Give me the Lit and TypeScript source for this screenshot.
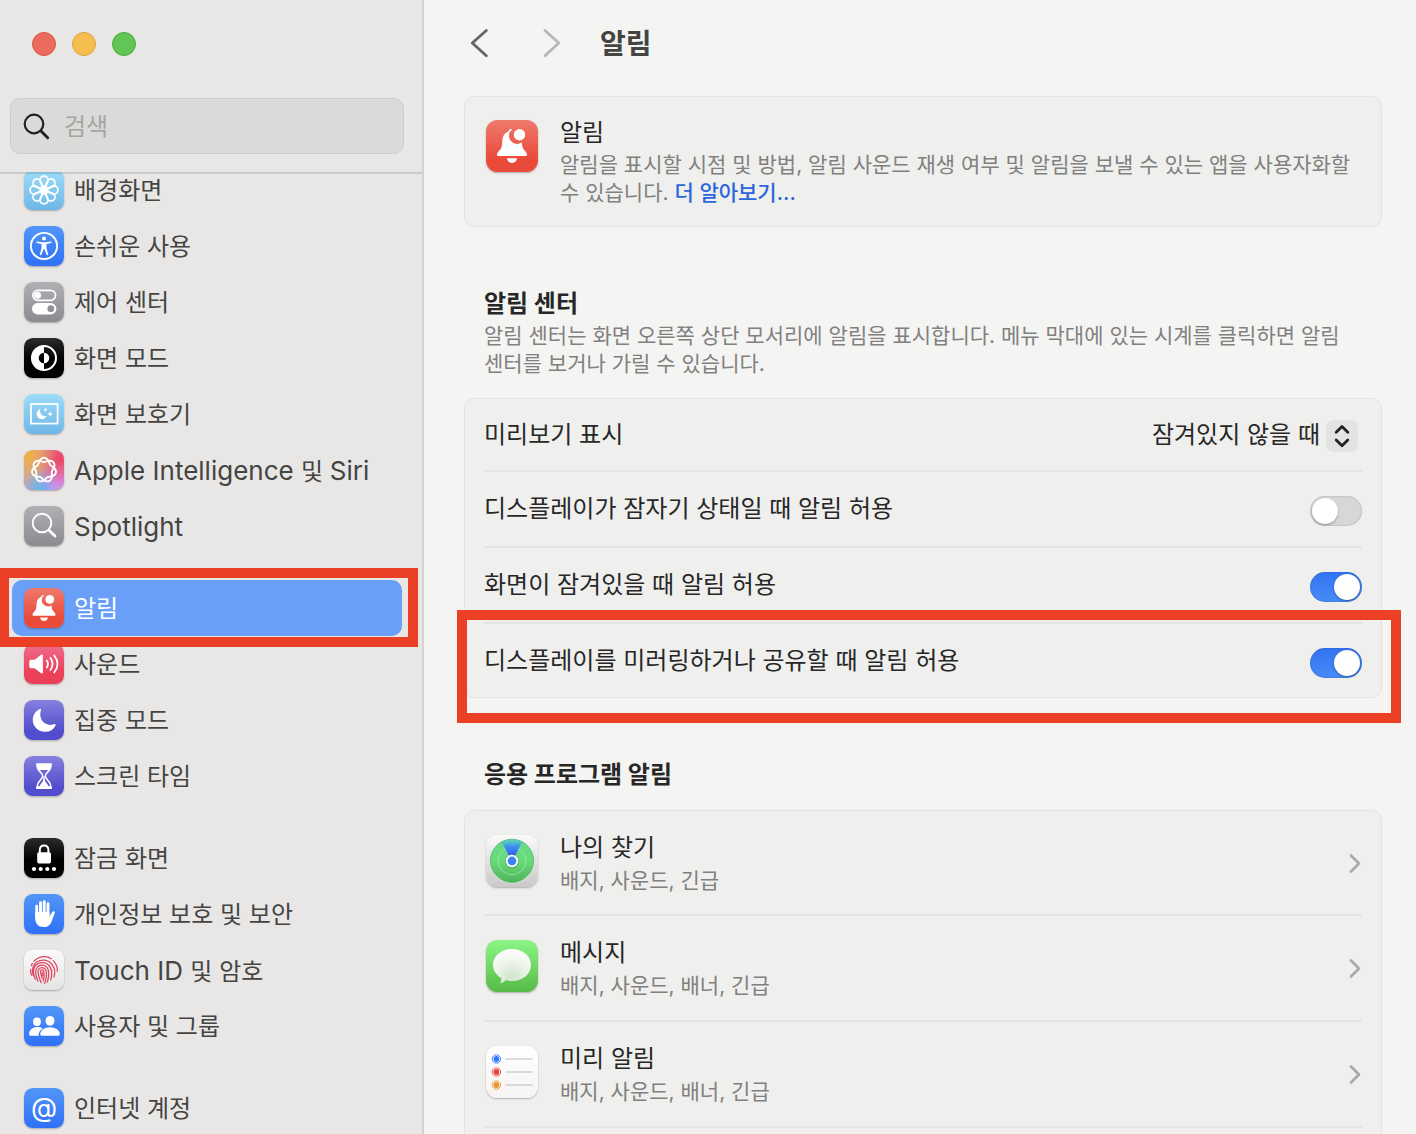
import { LitElement, html, svg, css, nothing } from "lit";
import type { TemplateResult } from "lit";
import { customElement, property } from "lit/decorators.js";

const point = (radius: number, angle: number) =>
  `${(20 + radius * Math.sin(angle)).toFixed(2)} ${(20 - radius * Math.cos(angle)).toFixed(2)}`;

/** Seven-lobed knot: one closed curve that circles the centre twice. */
const knot = (() => {
  const steps = 168;
  const points: string[] = [];
  for (let i = 0; i < steps; i++) {
    const angle = (i / steps) * Math.PI * 4;
    points.push(point(10.1 + 2.1 * Math.cos(3.5 * angle), angle));
  }
  return `M${points.join("L")}Z`;
})();

const bell = svg`
  <path fill="#fff" d="M26.200 9.300c-.6-.3-1.500-.3-2.400.1-.9.5-1.300 1.100-1.500 2-3.900 1.600-6 5-6 9.600 0 5.200-.8 7.200-3.100 9.800-1.400 1.600-2.200 2.500-2.200 3.700 0 1 .7 1.600 1.800 1.600h26.400c1.100 0 1.800-.6 1.800-1.600 0-1.200-.8-2.100-2.200-3.700-2-2.300-2.900-4.300-3-8.500a7.800 7.800 0 0 1-9.600-13z"/>
  <path fill="#fff" d="M21 38.200h10c-.4 2.900-2.300 4.700-5 4.700s-4.600-1.800-5-4.700z"/>
  <circle cx="33.500" cy="14.800" r="5.700" fill="#fff"/>`;

const glyphs: Record<string, TemplateResult | TemplateResult[]> = {
  wallpaper: svg`<g fill="none" stroke="#fff" stroke-width="1.700">
    ${[0, 45, 90, 135, 180, 225, 270, 315].map(
      (a) => svg`<path transform="rotate(${a} 20 20)" d="M20 18C19.200 15 15.900 13.500 15.900 10.200a4.100 4.100 0 0 1 8.200 0C24.100 13.500 20.800 15 20 18z"/>`
    )}</g><circle cx="20" cy="20" r="2" fill="none" stroke="#fff" stroke-width="1.500"/>`,
  accessibility: svg`
    <circle cx="20" cy="20" r="13.100" fill="none" stroke="#fff" stroke-width="1.900"/>
    <circle cx="20" cy="12.600" r="2" fill="#fff"/>
    <path fill="#fff" d="M13.300 15.500l5 .8h3.400l5-.8c1-.1 1.200 1.300.2 1.500l-4.400.9v4l1.700 6.300c.3 1.100-1.200 1.500-1.600.5L20.300 23h-.6l-2.300 5.700c-.4 1-1.900.6-1.600-.5l1.700-6.300v-4l-4.400-.9c-1-.2-.8-1.600.2-1.500z"/>`,
  control: svg`
    <rect x="8.800" y="8.300" width="22.800" height="10" rx="5" fill="none" stroke="#fff" stroke-width="1.700"/>
    <circle cx="13.600" cy="13.300" r="3.500" fill="#fff"/>
    <rect x="8" y="21" width="24.400" height="11.400" rx="5.700" fill="#fff"/>
    <circle cx="26.800" cy="26.700" r="3.400" fill="#929196"/>`,
  appearance: svg`
    <circle cx="20" cy="20" r="12" fill="none" stroke="#fff" stroke-width="2"/>
    <path fill="#fff" d="M20 7.500a12.500 12.500 0 0 0 0 25v-7.200a5.300 5.300 0 0 1 0-10.600z"/>
    <path fill="#fff" d="M20 14.700a5.300 5.300 0 0 1 0 10.600z"/>`,
  screensaver: svg`
    <rect x="7" y="10" width="26.600" height="19.600" fill="none" stroke="#fff" stroke-width="1.700"/>
    <path fill="#fff" d="M16.200 14.800c-5.600 2.600-4 10.300 1.500 10.400 2.300 0 4.100-1.200 4.900-3.200-4.300 1-7.600-2.800-6.400-7.200zM21.500 13.300l.6 1.700 1.700.6-1.700.6-.6 1.700-.6-1.700-1.700-.6 1.700-.6zM26.200 17l.8 2.200 2.200.8-2.200.8-.8 2.200-.8-2.200-2.200-.8 2.200-.8z"/>`,
  intelligence: svg`<path d="${knot}" fill="none" stroke="#fff" stroke-width="1.900" stroke-linejoin="round"/>`,
  spotlight: svg`<g fill="none" stroke="#fff" stroke-linecap="round">
    <circle cx="18" cy="17" r="9.300" stroke-width="1.900"/><path d="M25 24.300l6 5.800" stroke-width="2.800"/></g>`,
  sound: svg`
    <path fill="#fff" d="M7 15.800h3.700l6.300-5c.9-.7 1.900-.2 1.900.9v16.600c0 1.100-1 1.600-1.900.9l-6.300-5H7c-1 0-1.700-.7-1.700-1.700v-5c0-1 .7-1.700 1.700-1.700z"/>
    <path fill="none" stroke="#fff" stroke-width="1.700" stroke-linecap="round" d="M22.800 16.500c1.500 2.200 1.500 4.800 0 7M26.400 14c2.700 3.700 2.700 8.300 0 12M30.200 11.500c4.200 5.400 4.200 11.600 0 17"/>`,
  focus: svg`<path fill="#fff" d="M15.800 8.900C8.800 12 6.500 21 11.300 27.200c5.300 6.800 17.100 6.200 20.300-2.300.2-.7-.2-1.100-.9-.8C22.500 27.300 13.700 20.500 16.900 9.800c.2-.8-.3-1.200-1.100-.9z"/>`,
  hourglass: svg`
    <path fill="none" stroke="#fff" stroke-width="1.600" stroke-linejoin="round" d="M13 9c0 6.500 5.700 7.500 5.700 11S13 25 13 31h14c0-6-5.700-7.500-5.700-11S27 15.500 27 9z"/>
    <path fill="none" stroke="#fff" stroke-width="2.200" stroke-linecap="round" d="M13 8.300h14M13 31.900h14"/>
    <path fill="#fff" d="M13 8.500h14c0 2.500-.8 4.200-1.900 5.500H14.900C13.800 12.700 13 11 13 8.500zM19.500 20h1l.5 5 4 5.500H15l4-5.500z"/>`,
  lock: svg`
    <rect x="13.200" y="14.300" width="13.800" height="11.200" rx="1.800" fill="#fff"/>
    <path fill="none" stroke="#fff" stroke-width="2" d="M15.800 15v-2.700c0-2.900 1.600-4.700 4.300-4.700s4.300 1.800 4.300 4.700V15"/>
    <g fill="#fff"><circle cx="10" cy="31" r="2.100"/><circle cx="16.700" cy="31" r="2.100"/><circle cx="23.300" cy="31" r="2.100"/><circle cx="30" cy="31" r="2.100"/></g>`,
  hand: svg`
    <g stroke="#fff" stroke-width="2.900" stroke-linecap="round" fill="none"><path d="M12.700 12.200V24M16.500 8.800V23M20.200 7.600V23M24 9.600V23"/></g>
    <path fill="#fff" d="M11.250 18h14.200v4.700l2.800-4.600c.9-1.400 3-.7 2.500 1l-3 7.900c-1.400 4-3.800 6-8 6-5.700 0-8.500-3.400-8.500-9z"/>`,
  fingerprint: svg`<g fill="none" stroke="#e0445e" stroke-width="1.250" stroke-linecap="round">
    <path d="M10 11.200C15.500 5.300 23 5.600 27.200 8.800M29.200 10.600c3 3 4.400 6.500 4.200 10.700M7.300 15.600l1-2M6.600 19.300c-.3 2.400.2 4 .9 5.800M9.200 25.600c-1.500-5-.8-10.300 3.600-13.500 5.200-3.600 11.600-2.200 15.200 2.400 2.500 3.300 3.300 8.300 2 12.500M11.200 29c-1.400-3.500-2.200-6.400-1.500-9.700 1.600-7.200 11.300-9 15.600-3.300 2.800 3.600 3 9 1.400 14M14 31.200c-1.800-4-2.600-7-2.200-10.200.8-6 7.900-7.700 11.300-3.300 2.400 3.200 2 8.600.3 14.400M17.200 32.700c-2-4.500-3-7.700-3.100-10.600-.1-4.800 5.100-6 7.300-2.600 1.600 2.600 1.400 7.600-.7 14M18.300 28.500c-1-2.700-1.700-4.700-1.800-6.700 0-2.300 2.600-2.600 3.200-.6.800 2.800.5 5.700-.5 10M18.300 22.500l.5 3.200"/></g>`,
  users: svg`<g fill="#fff">
    <ellipse cx="13" cy="15.700" rx="3.900" ry="4.300"/><path d="M18.800 22.400c-1.700-.9-3.600-1.300-5.700-1.300-4.400 0-8 3-8 6.800 0 1.300.6 1.900 1.800 1.900h7.800c-.6-2.600 1.100-5.700 4.100-7.400z"/>
    <ellipse cx="26" cy="14.800" rx="4.500" ry="4.900"/><path d="M26 21.200c-5.200 0-9.800 3.300-9.800 6.800 0 1.200.8 1.800 2 1.800h15.600c1.200 0 2-.6 2-1.800 0-3.500-4.600-6.800-9.800-6.800z"/></g>`,
  at: svg`<text x="20" y="28.500" text-anchor="middle" font-family="Inter, sans-serif" font-size="27" fill="#fff">@</text>`,
  findmy: svg`
    <defs>
      <linearGradient id="radar" x1="0" y1="0" x2="0" y2="1"><stop stop-color="#69d98a"/><stop offset=".5" stop-color="#69da79"/><stop offset="1" stop-color="#51b35a"/></linearGradient>
      <linearGradient id="beam" x1="0" y1="0" x2="0" y2="1"><stop stop-color="#5ddbb0"/><stop offset=".45" stop-color="#3f8df0"/><stop offset="1" stop-color="#2a5cf5"/></linearGradient>
    </defs>
    <circle cx="26" cy="26" r="22.300" fill="#e9fbea"/>
    <circle cx="26" cy="25.800" r="21.600" fill="url(#radar)" stroke="#4bb86a" stroke-width=".8"/>
    <circle cx="26" cy="26" r="13.800" fill="none" stroke="#9ce8a4" stroke-width=".8"/>
    <path d="M16 6.900a21.600 21.600 0 0 1 20 0L29 21h-6z" fill="url(#beam)"/>
    <circle cx="26" cy="26.500" r="6.900" fill="#2e7c4a" opacity=".35"/>
    <circle cx="26" cy="26" r="6.200" fill="#fff"/><circle cx="26" cy="26" r="4.400" fill="#3a83f0"/>`,
  messages: svg`
    <defs><radialGradient id="bubble" cx=".5" cy=".8" r=".85"><stop stop-color="#d2e5cc"/><stop offset=".6" stop-color="#f1f6ef"/><stop offset="1" stop-color="#fff"/></radialGradient></defs>
    <path fill="url(#bubble)" d="M26 9c10.500 0 19 7 19 16s-8.500 16-19 16c-2.200 0-4.300-.3-6.300-.9-1.400 1.800-3.500 3-5.600 3.200.9-1.200 1.500-3 1.200-5.200C10.200 35.200 7 30.400 7 25 7 16 15.500 9 26 9z"/>`,
  reminders: svg`
    ${[["#3478f6", 13], ["#e2483d", 26], ["#e8962e", 39]].map(
      ([c, y]) => svg`<circle cx="10.400" cy="${y}" r="4.200" fill="none" stroke="${c}" stroke-width=".9"/><circle cx="10.400" cy="${y}" r="2.900" fill="${c}"/><path d="M20 ${y}h26" stroke="#cfcfcf" stroke-width="1.500" stroke-linecap="round"/>`
    )}`,
};

@customElement("app-tile")
class AppTile extends LitElement {
  @property() name = "";
  @property({ type: Boolean, reflect: true }) large = false;

  static styles = css`
    :host { display: block; flex: none; width: 40px; height: 40px; }
    :host([large]) { width: 52px; height: 52px; }
    .tile {
      display: block; width: 100%; height: 100%; border-radius: 22%;
      box-shadow: 0 1px 2px rgba(0, 0, 0, 0.28);
    }
    svg { display: block; width: 100%; height: 100%; }
    .wallpaper, .screensaver { background: linear-gradient(#9cdcf8, #6fb7e8); }
    .accessibility, .hand, .users, .at { background: linear-gradient(#5296f8, #2f70f6); }
    .control, .spotlight { background: linear-gradient(#b1b0b5, #8b8a8f); }
    .appearance, .lock { background: linear-gradient(#2b2b2b, #000 55%); }
    .intelligence {
      background:
        radial-gradient(circle at 10% 12%, #f0b040 0, rgba(240, 176, 64, 0) 55%),
        radial-gradient(circle at 90% 22%, #ef4166 0, rgba(239, 65, 102, 0) 60%),
        radial-gradient(circle at 92% 78%, #d88cf5 0, rgba(216, 140, 245, 0) 50%),
        radial-gradient(circle at 50% 100%, #4db8f8 0, rgba(77, 184, 248, 0) 55%),
        #cfa6a8;
    }
    .bell { background: linear-gradient(#ef7a6e, #ea4a3a 75%); }
    .sound { background: linear-gradient(#ef6d8c, #ec3f58 75%); }
    .focus, .hourglass { background: linear-gradient(#8681e0, #514ccb 80%); }
    .fingerprint { background: linear-gradient(#fafafa, #e4e4e4); }
    .findmy { background: linear-gradient(#fafafa, #c9c9c8); }
    .messages { background: linear-gradient(#8cf686, #56bb47); }
    .reminders { background: linear-gradient(#fff, #f5f4f3); }
  `;

  render() {
    const isBell = this.name === "bell";
    const box = this.large || isBell ? "0 0 52 52" : "0 0 40 40";
    return html`<span class="tile ${this.name}">
      <svg viewBox=${box} aria-hidden="true">${isBell ? bell : glyphs[this.name]}</svg>
    </span>`;
  }
}

interface NavItem { icon: string; label: string; }

const navGroups: NavItem[][] = [
  [
    { icon: "wallpaper", label: "배경화면" },
    { icon: "accessibility", label: "손쉬운 사용" },
    { icon: "control", label: "제어 센터" },
    { icon: "appearance", label: "화면 모드" },
    { icon: "screensaver", label: "화면 보호기" },
    { icon: "intelligence", label: "Apple Intelligence 및 Siri" },
    { icon: "spotlight", label: "Spotlight" },
  ],
  [
    { icon: "bell", label: "알림" },
    { icon: "sound", label: "사운드" },
    { icon: "focus", label: "집중 모드" },
    { icon: "hourglass", label: "스크린 타임" },
  ],
  [
    { icon: "lock", label: "잠금 화면" },
    { icon: "hand", label: "개인정보 보호 및 보안" },
    { icon: "fingerprint", label: "Touch ID 및 암호" },
    { icon: "users", label: "사용자 및 그룹" },
  ],
  [{ icon: "at", label: "인터넷 계정" }],
];

/** Sets Latin runs one step larger so that they balance the Hangul beside them. */
const mixedScript = (label: string) =>
  label
    .split(/([A-Za-z][A-Za-z ]*)/)
    .filter(Boolean)
    .map((run) => (/^[A-Za-z]/.test(run) ? html`<span class="latin">${run}</span>` : run));

const toggles = [
  { id: "asleep", label: "디스플레이가 잠자기 상태일 때 알림 허용", on: false, marked: false },
  { id: "locked", label: "화면이 잠겨있을 때 알림 허용", on: true, marked: false },
  { id: "mirroring", label: "디스플레이를 미러링하거나 공유할 때 알림 허용", on: true, marked: true },
];

const apps = [
  { icon: "findmy", name: "나의 찾기", detail: "배지, 사운드, 긴급" },
  { icon: "messages", name: "메시지", detail: "배지, 사운드, 배너, 긴급" },
  { icon: "reminders", name: "미리 알림", detail: "배지, 사운드, 배너, 긴급" },
];

@customElement("app-root")
class AppRoot extends LitElement {
  static styles = css`
    :host {
      display: block;
      font-family: Inter, "Noto Sans CJK KR", sans-serif;
      font-size: 24px;
      line-height: 32px;
      color: #272727;
    }
    * { box-sizing: border-box; }
    ul, h1, h2, h3, p { margin: 0; padding: 0; font-size: inherit; font-weight: inherit; }
    ul { list-style: none; }
    button, input, select { font: inherit; color: inherit; margin: 0; border: 0; padding: 0; background: none; }

    .window { display: grid; grid-template-columns: 424px minmax(0, 1fr); height: 100vh; overflow: hidden; background: #f4f4f2; }

    .sidebar { display: flex; flex-direction: column; min-height: 0; overflow: hidden; background: #e8e7e5; border-right: 2px solid #d4d3d1; color: #444443; }
    .top { position: relative; z-index: 1; flex: none; padding: 32px 18px 18px 10px; border-bottom: 2px solid rgba(0, 0, 0, 0.12); }
    .lights { display: flex; gap: 16px; padding-left: 22px; margin-bottom: 42px; }
    .light { width: 24px; height: 24px; border-radius: 50%; }
    .close { background: #ed6a5f; border: 1px solid #d9564b; }
    .minimize { background: #f5bf4f; border: 1px solid #d9a33c; }
    .zoom { background: #61c655; border: 1px solid #4fab40; }
    .search { display: flex; align-items: center; gap: 14px; height: 56px; padding: 0 12px; border: 1px solid #cfcecc; border-radius: 10px; background: #dbdad8; }
    .search svg { flex: none; width: 27px; height: 28px; }
    .search input { flex: 1; min-width: 0; padding-top: 2px; outline: none; }
    .search input::placeholder { color: #a5a5a3; opacity: 1; }

    .list { flex: 1; min-height: 0; margin-top: -2px; overflow: hidden; }
    .groups { display: flex; flex-direction: column; gap: 26px; margin-top: -10px; }
    .item { position: relative; padding: 0 20px 0 12px; }
    .link { display: flex; align-items: center; gap: 10px; width: 100%; height: 56px; padding: 0 12px; border-radius: 10px; text-align: left; white-space: nowrap; }
    .label { padding-top: 2px; }
    .latin { font-size: 26px; }
    .link.selected { background: #6a9ff8; color: #fff; }
    .mark { position: absolute; z-index: 2; border: 10px solid #eb4026; pointer-events: none; }
    .item .mark { inset: -12px 4px -11px -1px; }

    .main { min-width: 0; overflow: hidden; padding: 0 34px 0 40px; }
    .bar { display: flex; align-items: center; height: 96px; padding: 0 0 10px 4px; }
    .nav { display: flex; width: 24px; margin-right: 48px; }
    .nav svg { width: 24px; height: 32px; }
    .nav + .nav { margin-right: 36px; }
    .bar h1 { padding-top: 2px; font-size: 28px; font-weight: 700; color: #444443; }

    .card { border: 1px solid #e3e3e1; border-radius: 10px; background: #efefed; padding: 0 19px; }
    .intro { display: flex; gap: 22px; padding: 20px 21px 19px; }
    .intro app-tile { margin-top: 3px; }
    .muted { font-size: 21px; line-height: 28px; color: #80807f; }
    .copy { display: flex; flex-direction: column; gap: 2px; min-width: 0; }
    a { color: #2a66dc; text-decoration: none; font-weight: 500; }

    .section { margin: 61px 0 20px; padding: 0 20px; display: flex; flex-direction: column; gap: 2px; }
    .section.short { margin-bottom: 19px; }
    .section h2 { font-weight: 700; }

    .row { position: relative; display: flex; align-items: center; justify-content: space-between; min-height: 76px; }
    .row:first-child { min-height: 71px; }
    .row:last-child { min-height: 75px; }
    .row + .row { border-top: 2px solid #e4e4e2; }
    .row .mark { inset: -14px -39px -26px -27px; }

    .popup { position: relative; margin-right: 4px; }
    .popup select { appearance: none; display: block; height: 32px; padding-right: 38px; text-align: right; outline: none; }
    .stepper { position: absolute; right: 0; top: 1px; width: 32px; height: 32px; border-radius: 8px; background: #e3e3e1; pointer-events: none; }

    .switch { appearance: none; display: flex; flex: none; width: 52px; height: 30px; margin-top: 4px; padding: 2px; border-radius: 15px; background: #d7d7d5; box-shadow: inset 0 0 2px rgba(0, 0, 0, 0.25); }
    .switch::before { content: ""; width: 26px; height: 26px; border-radius: 50%; background: #fff; box-shadow: 0 1px 2px rgba(0, 0, 0, 0.35); }
    .switch:checked { justify-content: flex-end; background: linear-gradient(#3273f2, #468cf7); }

    .apps .row { min-height: 106px; }
    .apps .row:first-child { min-height: 103px; }
    .app { display: flex; flex: 1; align-items: center; gap: 22px; padding-left: 2px; text-align: left; }
    .app app-tile { margin-bottom: 4px; }
    .app .copy { flex: 1; gap: 3px; padding-top: 1px; }
    .chevron { width: 14px; height: 20px; }
  `;

  private navRow(item: NavItem) {
    const selected = item.icon === "bell";
    return html`<li class="item">
      <button class="link ${selected ? "selected" : ""}" aria-current=${selected ? "page" : nothing}>
        <app-tile name=${item.icon}></app-tile><span class="label">${mixedScript(item.label)}</span>
      </button>
      ${selected ? html`<span class="mark"></span>` : nothing}
    </li>`;
  }

  render() {
    return html`<div class="window">
      <aside class="sidebar">
        <div class="top">
          <div class="lights">
            <button class="light close" aria-label="닫기"></button>
            <button class="light minimize" aria-label="최소화"></button>
            <button class="light zoom" aria-label="확대"></button>
          </div>
          <label class="search">
            <svg viewBox="0 0 27 28" fill="none" stroke="#222" stroke-linecap="round" aria-hidden="true">
              <circle cx="11" cy="12" r="9.300" stroke-width="2.200"/><path d="M18 19l6.700 6.700" stroke-width="2.900"/>
            </svg>
            <input type="text" placeholder="검색" aria-label="검색" />
          </label>
        </div>
        <nav class="list">
          <div class="groups">
            ${navGroups.map((group) => html`<ul>${group.map((item) => this.navRow(item))}</ul>`)}
          </div>
        </nav>
      </aside>

      <main class="main">
        <header class="bar">
          <button class="nav" aria-label="뒤로">
            <svg viewBox="0 0 24 32" fill="none" stroke="#666665" stroke-width="2.900" stroke-linecap="round" stroke-linejoin="round"><path d="M18.300 3.500L4.300 16l14 12.800"/></svg>
          </button>
          <button class="nav" aria-label="앞으로">
            <svg viewBox="0 0 24 32" fill="none" stroke="#b7b7b5" stroke-width="2.900" stroke-linecap="round" stroke-linejoin="round"><path d="M5 3.500L18.800 16 5 28.800"/></svg>
          </button>
          <h1>알림</h1>
        </header>

        <section class="card intro">
          <app-tile name="bell" large></app-tile>
          <div class="copy">
            <h2>알림</h2>
            <p class="muted">알림을 표시할 시점 및 방법, 알림 사운드 재생 여부 및 알림을 보낼 수 있는 앱을 사용자화할 수 있습니다. <a href="#learn">더 알아보기...</a></p>
          </div>
        </section>

        <div class="section">
          <h2>알림 센터</h2>
          <p class="muted">알림 센터는 화면 오른쪽 상단 모서리에 알림을 표시합니다. 메뉴 막대에 있는 시계를 클릭하면 알림 센터를 보거나 가릴 수 있습니다.</p>
        </div>
        <div class="card">
          <div class="row">
            <label for="preview">미리보기 표시</label>
            <div class="popup">
              <select id="preview"><option>잠겨있지 않을 때</option></select>
              <svg class="stepper" viewBox="0 0 32 32" fill="none" stroke="#222" stroke-width="2.800" stroke-linecap="round" stroke-linejoin="round" aria-hidden="true"><path d="M10.200 12.200L16 6.500l5.800 5.700M10.200 20l5.800 5.700 5.800-5.700"/></svg>
            </div>
          </div>
          ${toggles.map(
            (t) => html`<div class="row">
              <label for=${t.id}>${t.label}</label>
              <input class="switch" type="checkbox" role="switch" id=${t.id} ?checked=${t.on} />
              ${t.marked ? html`<span class="mark"></span>` : nothing}
            </div>`
          )}
        </div>

        <div class="section short"><h2>응용 프로그램 알림</h2></div>
        <ul class="card apps">
          ${apps.map(
            (app) => html`<li class="row">
              <button class="app">
                <app-tile name=${app.icon} large></app-tile>
                <span class="copy"><span>${app.name}</span><span class="muted">${app.detail}</span></span>
                <svg class="chevron" viewBox="0 0 14 20" fill="none" stroke="#a9a9a8" stroke-width="2.600" stroke-linecap="round" stroke-linejoin="round" aria-hidden="true"><path d="M3 2.500L11 10.500 3 18.500"/></svg>
              </button>
            </li>`
          )}
          <li class="row"></li>
        </ul>
      </main>
    </div>`;
  }
}
